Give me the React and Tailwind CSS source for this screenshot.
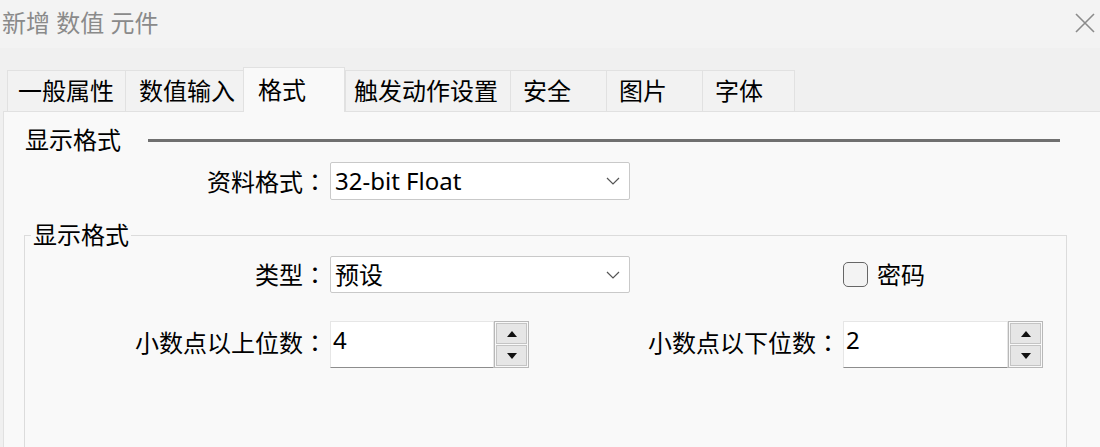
const tabs = [
  { label: "一般属性", cls: "w-[118px] pl-[10px]" },
  { label: "数值输入", cls: "w-[118px] pl-[13px]" },
  { label: "格式", cls: "w-[102px] pl-[14px]", active: true },
  { label: "触发动作设置", cls: "w-[165px] pl-[8px]" },
  { label: "安全", cls: "w-[96px] pl-[12px]" },
  { label: "图片", cls: "w-[96px] pl-[12px]" },
  { label: "字体", cls: "w-[93px] pl-[12px] border-r" },
];

function Chevron() {
  return (
    <svg width="14" height="8" viewBox="0 0 14 8">
      <path d="M1 1l6 6 6-6" fill="none" stroke="#555" strokeWidth="1.2" />
    </svg>
  );
}

function Label({ text, w, extra = "" }) {
  return (
    <div className={`${w} ${extra} text-right leading-[30px]`}>
      {text}
      <span className="font-['Noto_Sans_CJK_TC',sans-serif]">：</span>
    </div>
  );
}

function Select({ value, h }) {
  return (
    <div className={`flex ${h} w-[300px] items-center justify-between rounded-[2px] border border-[#c9c9c9] bg-white pl-[4px] pr-[9px]`}>
      <span className="leading-[28px]">{value}</span>
      <Chevron />
    </div>
  );
}

function SpinBtn({ up }) {
  return (
    <div className="flex flex-1 items-center justify-center border border-[#c4c4c4] bg-[#e6e6e6]">
      <svg width="10" height="6" viewBox="0 0 10 6">
        {up ? <path d="M0 6L5 0L10 6Z" fill="#111" /> : <path d="M0 0L5 6L10 0Z" fill="#111" />}
      </svg>
    </div>
  );
}

function Spin({ value, w }) {
  return (
    <div className={`flex h-[47px] ${w}`}>
      <div className="flex-1 border border-[#e6e6e6] border-b-[#8d8d8d] bg-white pl-[2px] leading-[36px]">
        {value}
      </div>
      <div className="flex w-[35px] flex-col gap-[1px] border border-[#b8b8b8] p-[1px]">
        <SpinBtn up />
        <SpinBtn />
      </div>
    </div>
  );
}

export default function App() {
  return (
    <div className="flex h-[447px] w-[1100px] flex-col overflow-hidden bg-[#f0f0f0] font-['Noto_Sans','Noto_Sans_CJK_SC',sans-serif] text-[24px] text-black">
      {/* title bar */}
      <div className="flex h-[48px] shrink-0 items-center justify-between bg-[#f3f3f3] pb-[3px] pl-[2px] pr-[5px]">
        <span className="leading-[30px] text-[#8a8a8a]">新增 数值 元件</span>
        <svg width="20" height="20" viewBox="0 0 20 20">
          <path d="M1 1L19 19M19 1L1 19" stroke="#8b8b8b" strokeWidth="1.6" />
        </svg>
      </div>

      {/* tabs */}
      <div className="flex h-[63px] shrink-0 items-end pl-[7px]">
        {tabs.map((t) =>
          t.active ? (
            <div
              key={t.label}
              className={`relative z-10 -mb-px flex h-[45px] items-center border border-b-0 border-[#e1e1e1] bg-[#f9f9f9] pb-[1px] ${t.cls}`}
            >
              {t.label}
            </div>
          ) : (
            <div
              key={t.label}
              className={`flex h-[41px] items-center border-l border-t border-[#e1e1e1] bg-[#f2f2f2] ${t.cls}`}
            >
              {t.label}
            </div>
          )
        )}
      </div>

      {/* panel */}
      <div className="ml-[3px] flex flex-1 flex-col border-l border-t border-[#e1e1e1] bg-[#f9f9f9]">
        <div className="mt-[10px] flex h-[36px] items-center pl-[21px]">
          <span className="leading-[30px]">显示格式</span>
          <div className="ml-[27px] h-[3px] w-[912px] bg-[#707070]" />
        </div>

        <div className="mt-[4px] flex items-center">
          <Label text="资料格式" w="w-[323px]" />
          <div className="ml-[3px]">
            <Select value="32-bit Float" h="h-[38px]" />
          </div>
        </div>

        <fieldset className="ml-[20px] mt-[23px] w-[1043px] flex-1 border border-b-0 border-[#dcdcdc]">
          <legend className="ml-[6px] px-[2px] leading-[24px]">显示格式</legend>

          <div className="mt-[9px] flex items-center">
            <Label text="类型" w="w-[302px]" />
            <div className="ml-[3px]">
              <Select value="预设" h="h-[37px]" />
            </div>
            <div className="ml-[213px] h-[25px] w-[25px] rounded-[5px] border-[1.5px] border-[#666] bg-[#f3f3f3]" />
            <span className="ml-[9px] leading-[30px]">密码</span>
          </div>

          <div className="mt-[28px] flex items-center">
            <Label text="小数点以上位数" w="w-[302px]" extra="pb-[5px]" />
            <div className="ml-[3px]">
              <Spin value="4" w="w-[199px]" />
            </div>
            <Label text="小数点以下位数" w="w-[311px]" extra="pb-[5px]" />
            <div className="ml-[3px]">
              <Spin value="2" w="w-[200px]" />
            </div>
          </div>
        </fieldset>
      </div>
    </div>
  );
}
